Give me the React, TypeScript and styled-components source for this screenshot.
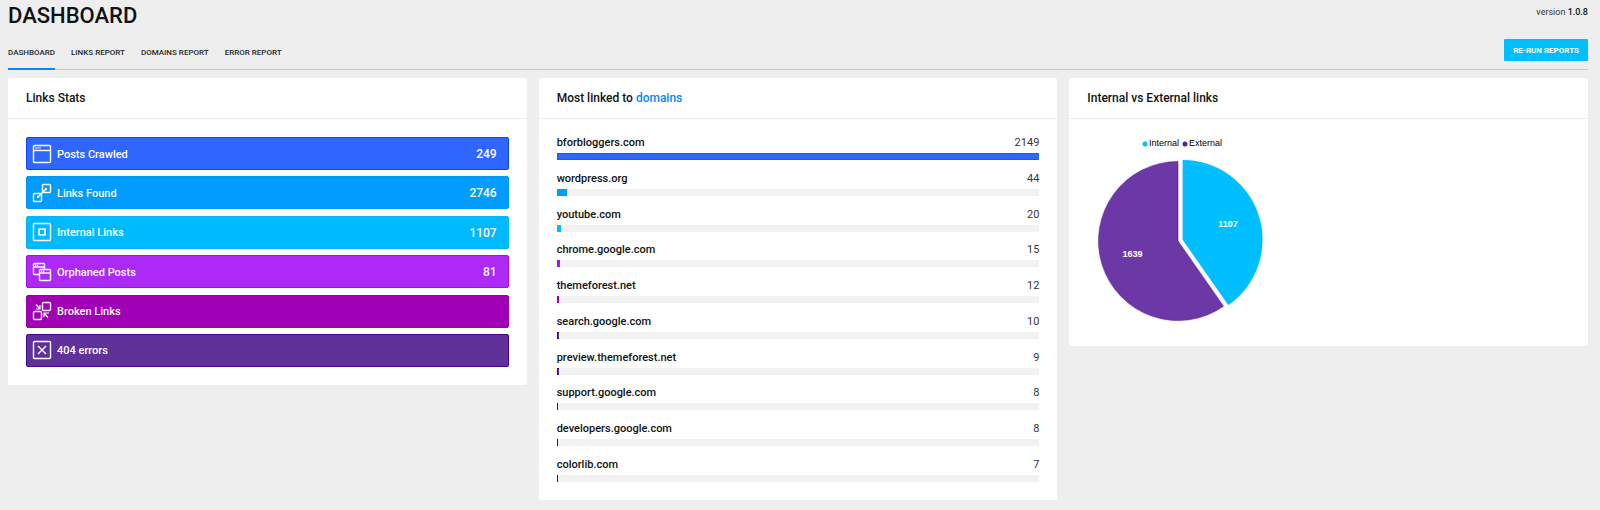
import type { ReactNode } from 'react';
import styled, { createGlobalStyle } from 'styled-components';

const GlobalStyle = createGlobalStyle`
  * { box-sizing: border-box; }
  body {
    margin: 0;
    background: #eeeeee;
    color: #101214;
    font-family: Roboto, "Liberation Sans", sans-serif;
    font-size: 11px;
  }
`;

const Page = styled.main`
  padding: 0 12px 10px 8px;
`;

const TitleBar = styled.header`
  display: flex;
  justify-content: space-between;
  align-items: flex-start;
  height: 32px;
`;

const Title = styled.h1`
  margin: 0;
  font-size: 22px;
  line-height: 32px;
  font-weight: 500;
`;

const Version = styled.p`
  margin: 0;
  font-size: 9px;
  line-height: 24px;
  color: #333639;
  strong {
    font-weight: 500;
    color: #101214;
  }
`;

const Toolbar = styled.div`
  display: flex;
  justify-content: space-between;
  align-items: flex-start;
  height: 38px;
  padding-top: 7px;
  margin-bottom: 8px;
  border-bottom: 1px solid #c8c8c8;
`;

const Tabs = styled.nav`
  display: flex;
  gap: 16px;
`;

const Tab = styled.a<{ $active?: boolean }>`
  height: 31px;
  border-bottom: 2px solid ${(p) => (p.$active ? '#0a84ff' : 'transparent')};
  font-size: 8px;
  line-height: 28px;
  font-weight: 500;
  color: #25282b;
  text-decoration: none;
  white-space: nowrap;
`;

const RunButton = styled.button`
  height: 22px;
  padding: 1px 9px 0;
  border: 0;
  border-radius: 1px;
  background: #00bfff;
  color: #ffffff;
  font: 700 8px/21px Roboto, sans-serif;
  cursor: pointer;
`;

const Columns = styled.div`
  display: grid;
  grid-template-columns: repeat(3, minmax(0, 1fr));
  gap: 12px;
  align-items: start;
`;

const Card = styled.section`
  background: #ffffff;
  border-radius: 2px;
`;

const CardTitle = styled.h2`
  margin: 0;
  padding: 1px 18px 0;
  border-bottom: 1px solid #eeeeee;
  font-size: 12px;
  line-height: 39px;
  font-weight: 500;
  a {
    color: #0a84ff;
    text-decoration: none;
  }
`;

const CardBody = styled.div`
  padding: 18px;
`;

const StatList = styled.ul`
  display: flex;
  flex-direction: column;
  justify-content: space-between;
  min-height: 230px;
  margin: 0;
  padding: 0;
  list-style: none;
`;

const Stat = styled.li<{ $fill: string; $edge: string }>`
  display: flex;
  align-items: center;
  height: 33px;
  padding: 0 11px 0 5px;
  border: 1px solid ${(p) => p.$edge};
  border-radius: 2px;
  background: ${(p) => p.$fill};
  color: #ffffff;
`;

const StatIcon = styled.svg`
  width: 20px;
  height: 20px;
  margin-right: 5px;
  fill: none;
  stroke: #ffffff;
  stroke-width: 1.4;
`;

const StatLabel = styled.span`
  flex: 1;
  padding-top: 1px;
  font-size: 11px;
  font-weight: 500;
`;

const StatValue = styled.span`
  padding-top: 1px;
  font-size: 12px;
  font-weight: 500;
`;

const DomainList = styled.ul`
  display: flex;
  flex-direction: column;
  justify-content: space-between;
  min-height: 345px;
  margin: 0;
  padding: 0;
  list-style: none;
`;

const DomainHead = styled.div`
  display: flex;
  justify-content: space-between;
  height: 16px;
  line-height: 12px;
`;

const DomainName = styled.span`
  font-size: 11px;
  font-weight: 500;
`;

const DomainCount = styled.span`
  font-size: 11px;
  color: #33373b;
`;

const Track = styled.div`
  height: 7px;
  border-radius: 1px;
  background: #f2f2f2;
  overflow: hidden;
`;

const Fill = styled.div<{ $fill: string; $edge: string }>`
  height: 7px;
  min-width: 1px;
  border: solid ${(p) => p.$edge};
  border-width: 1px 0 1px 1px;
  background: ${(p) => p.$fill};
`;

const Chart = styled.svg`
  display: block;
  width: 190px;
  height: 191px;
  font-family: "Liberation Sans", Arial, sans-serif;
  font-size: 9px;
`;

const Slice = styled.path`
  filter: drop-shadow(0 0 1px rgba(60, 30, 90, 0.2));
`;

interface StatItem {
  label: string;
  value?: number;
  fill: string;
  edge: string;
  icon: ReactNode;
}

const stats: StatItem[] = [
  {
    label: 'Posts Crawled', value: 249, fill: '#2f66ff', edge: '#0a48f0',
    icon: (
      <>
        <rect x="1.5" y="1.5" width="17" height="17" rx="1" />
        <path d="M1.5 6.5h17" />
        <path d="M3.5 4h5" strokeDasharray="1.2 0.8" />
      </>
    ),
  },
  {
    label: 'Links Found', value: 2746, fill: '#009dff', edge: '#0096fa',
    icon: (
      <>
        <rect x="10.5" y="1.5" width="8" height="8" rx="1" />
        <rect x="1.5" y="10.5" width="8" height="8" rx="1" />
        <path d="M5.5 14.5l9-9" />
        <path d="M12.8 5.5h1.7v1.7M5.5 12.8v1.7h1.7" strokeWidth="1" />
      </>
    ),
  },
  {
    label: 'Internal Links', value: 1107, fill: '#00baff', edge: '#00b6fc',
    icon: (
      <>
        <rect x="1.5" y="1.5" width="17" height="17" rx="1" />
        <rect x="7" y="7" width="6" height="6" rx="0.5" strokeWidth="1.6" />
      </>
    ),
  },
  {
    label: 'Orphaned Posts', value: 81, fill: '#ad29f7', edge: '#a00ee8',
    icon: (
      <>
        <path d="M7.5 12.5h-5a1 1 0 0 1-1-1v-9a1 1 0 0 1 1-1h9a1 1 0 0 1 1 1v5M1.5 5h11" />
        <path d="M3 3.2h4M9 9.2h4" strokeDasharray="1.2 0.8" />
        <rect x="7.5" y="7.5" width="11" height="11" rx="1" />
        <path d="M7.5 11h11" />
      </>
    ),
  },
  {
    label: 'Broken Links', fill: '#a000b6', edge: '#9800ae',
    icon: (
      <>
        <rect x="10.5" y="1.5" width="8" height="8" rx="1" />
        <rect x="1.5" y="10.5" width="8" height="8" rx="1" />
        <path d="M4 3.5l4 4.5M8 4v4h-4M16 16.5l-4-4.5M12 16v-4h5" strokeWidth="1.2" />
      </>
    ),
  },
  {
    label: '404 errors', fill: '#61319b', edge: '#480090',
    icon: (
      <>
        <rect x="1.5" y="1.5" width="17" height="17" rx="1" />
        <path d="M6 6l8 8M14 6l-8 8" />
      </>
    ),
  },
];

const domains = [
  { name: 'bforbloggers.com', count: 2149, fill: '#2f66ff', edge: '#2453f5' },
  { name: 'wordpress.org', count: 44, fill: '#009dff', edge: '#1596f5' },
  { name: 'youtube.com', count: 20, fill: '#00baff', edge: '#18b4f2' },
  { name: 'chrome.google.com', count: 15, fill: '#ad12f2', edge: '#a00ee8' },
  { name: 'themeforest.net', count: 12, fill: '#a000b6', edge: '#9800ae' },
  { name: 'search.google.com', count: 10, fill: '#61319b', edge: '#480090' },
  { name: 'preview.themeforest.net', count: 9, fill: '#61319b', edge: '#480090' },
  { name: 'support.google.com', count: 8, fill: '#61319b', edge: '#480090' },
  { name: 'developers.google.com', count: 8, fill: '#61319b', edge: '#480090' },
  { name: 'colorlib.com', count: 7, fill: '#61319b', edge: '#480090' },
];

const maxCount = domains[0].count;

export default function App() {
  return (
    <>
      <GlobalStyle />
      <Page>
        <TitleBar>
          <Title>DASHBOARD</Title>
          <Version>version <strong>1.0.8</strong></Version>
        </TitleBar>
        <Toolbar>
          <Tabs>
            <Tab href="#dashboard" $active aria-current="page">DASHBOARD</Tab>
            <Tab href="#links">LINKS REPORT</Tab>
            <Tab href="#domains">DOMAINS REPORT</Tab>
            <Tab href="#errors">ERROR REPORT</Tab>
          </Tabs>
          <RunButton type="button">RE-RUN REPORTS</RunButton>
        </Toolbar>
        <Columns>
          <Card>
            <CardTitle>Links Stats</CardTitle>
            <CardBody>
              <StatList>
                {stats.map((s) => (
                  <Stat key={s.label} $fill={s.fill} $edge={s.edge}>
                    <StatIcon viewBox="0 0 20 20" aria-hidden="true">{s.icon}</StatIcon>
                    <StatLabel>{s.label}</StatLabel>
                    {s.value !== undefined && <StatValue>{s.value}</StatValue>}
                  </Stat>
                ))}
              </StatList>
            </CardBody>
          </Card>
          <Card>
            <CardTitle>Most linked to <a href="#domains">domains</a></CardTitle>
            <CardBody>
              <DomainList>
                {domains.map((d) => (
                  <li key={d.name}>
                    <DomainHead>
                      <DomainName>{d.name}</DomainName>
                      <DomainCount>{d.count}</DomainCount>
                    </DomainHead>
                    <Track>
                      <Fill $fill={d.fill} $edge={d.edge} style={{ width: `${(d.count / maxCount) * 100}%` }} />
                    </Track>
                  </li>
                ))}
              </DomainList>
            </CardBody>
          </Card>
          <Card>
            <CardTitle>Internal vs External links</CardTitle>
            <CardBody>
              <Chart viewBox="0 0 190 191" role="img" aria-label="Internal 1107, External 1639">
                <circle cx="58" cy="7" r="2.5" fill="#00bfff" />
                <text x="62" y="9">Internal</text>
                <circle cx="98" cy="7" r="2.5" fill="#5f1a9e" />
                <text x="102" y="9">External</text>
                <Slice d="M91 104V24.5A79.5 79.5 0 1 0 136.5 169.2Z" fill="#6c38a5" stroke="#5c1f9c" strokeWidth="0.5" />
                <Slice d="M95.7 102.7V23A79.7 79.7 0 0 1 141.3 168.1Z" fill="#00bfff" />
                <text x="141" y="90" textAnchor="middle" fontWeight="700" fill="#ffffff">1107</text>
                <text x="45.5" y="120" textAnchor="middle" fontWeight="700" fill="#ffffff">1639</text>
              </Chart>
            </CardBody>
          </Card>
        </Columns>
      </Page>
    </>
  );
}
